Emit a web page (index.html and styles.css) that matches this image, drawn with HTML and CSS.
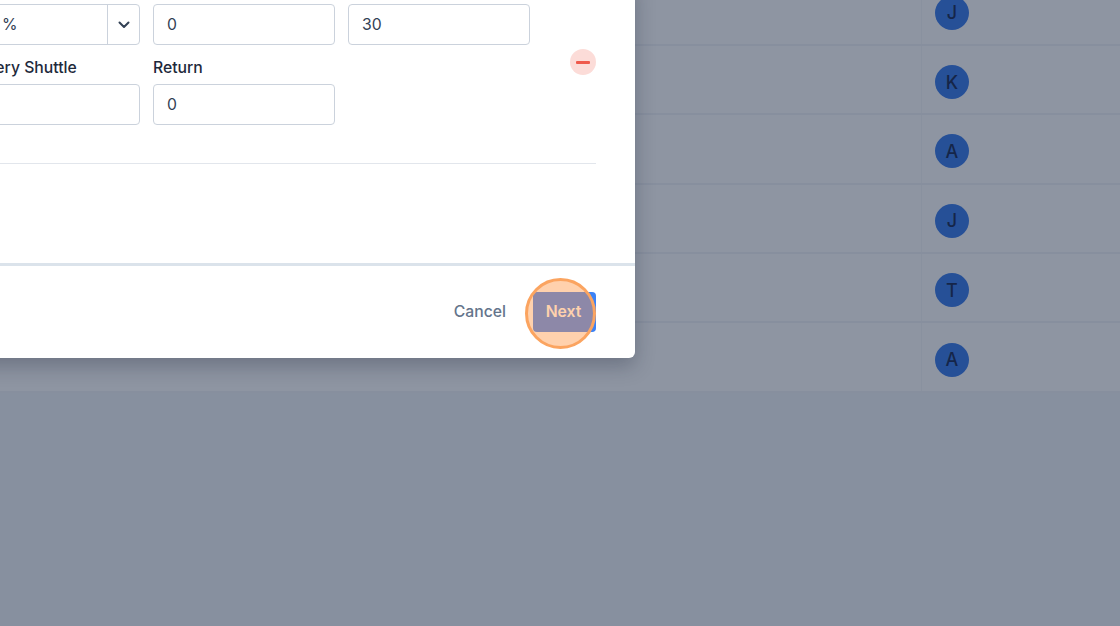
FILE: index.html
```html
<!DOCTYPE html>
<html lang="en">
<head>
<meta charset="utf-8">
<title>Add charges</title>
<link rel="stylesheet" href="styles.css">
</head>
<body>
<div class="page">
  <div class="table">
    <div class="row"><div class="cell-main"></div><div class="cell-user"><span class="avatar">J</span></div></div>
    <div class="row"><div class="cell-main"></div><div class="cell-user"><span class="avatar">K</span></div></div>
    <div class="row"><div class="cell-main"></div><div class="cell-user"><span class="avatar">A</span></div></div>
    <div class="row"><div class="cell-main"></div><div class="cell-user"><span class="avatar">J</span></div></div>
    <div class="row"><div class="cell-main"></div><div class="cell-user"><span class="avatar">T</span></div></div>
    <div class="row"><div class="cell-main"></div><div class="cell-user"><span class="avatar">A</span></div></div>
  </div>
  <div class="scrim"></div>
  <div class="modal">
    <div class="modal-body">
      <div class="charge">
        <div class="fields">
          <div class="field">
            <div class="box box-select"><span class="select-value">%</span><span class="select-arrow"><svg width="12" height="8" viewBox="0 0 12 8" fill="none"><path d="M1.5 1.5 6 6l4.5-4.5" stroke="#334155" stroke-width="2" stroke-linecap="round" stroke-linejoin="round"/></svg></span></div>
          </div>
          <div class="field"><div class="box">0</div></div>
          <div class="field"><div class="box">30</div></div>
          <div class="field labelled"><label class="label">Delivery Shuttle</label><div class="box"></div></div>
          <div class="field labelled"><label class="label">Return</label><div class="box">0</div></div>
        </div>
        <button class="remove" type="button" aria-label="Remove"><span class="minus"></span></button>
      </div>
      <div class="divider"></div>
    </div>
    <div class="modal-footer">
      <button class="btn-cancel" type="button">Cancel</button>
      <button class="btn-next" type="button">Next</button>
    </div>
  </div>
  <div class="spotlight"></div>
</div>
</body>
</html>
```
FILE: styles.css
```css
* { box-sizing: border-box; }
html, body { margin: 0; padding: 0; }
body { font-family: Inter, "Liberation Sans", sans-serif; background: #f1f5f9; }
.page { position: relative; width: 1120px; height: 626px; overflow: hidden; background: #f1f5f9; }

.table { margin-top: -23.5px; background: #fff; }
.row { display: flex; height: 69.4px; border-bottom: 2px solid #f1f3f6; }
.cell-main { width: 922px; border-right: 1px solid #f5f6f8; }
.cell-user { flex: 1; display: flex; align-items: center; padding-left: 13px; padding-top: 5px; }
.avatar { width: 34px; height: 34px; border-radius: 50%; background: #2f74e8; color: #0d1f4c; font-size: 18px; font-weight: 500; display: flex; align-items: center; justify-content: center; }

.scrim { position: absolute; inset: 0; background: rgba(29, 43, 69, 0.5); }

.modal { position: absolute; left: -65px; top: -20px; width: 700px; background: #fff; border-radius: 6px; box-shadow: 0 8px 20px rgba(20, 30, 50, 0.28); }
.modal-body { padding: 24px 39px 0 23px; }
.charge { display: flex; justify-content: space-between; }
.fields { display: grid; grid-template-columns: repeat(3, 182px); column-gap: 13px; row-gap: 12px; }
.field { display: flex; flex-direction: column; }
.labelled { gap: 6px; padding-top: 1px; }
.label { font-size: 15.75px; line-height: 20px; font-weight: 500; color: #1e293b; display: block; }
.box { height: 41px; border: 1px solid #cbd2dc; border-radius: 4px; background: #fff; padding-left: 13px; font-size: 15.75px; line-height: 39px; color: #334155; }
.box-select { display: flex; padding-left: 0; }
.select-value { flex: 1; padding-left: 43px; }
.select-arrow { width: 32px; border-left: 1px solid #cbd2dc; display: flex; align-items: center; justify-content: center; }

.remove { width: 26px; height: 26px; margin-top: 45px; padding: 0; border: 0; border-radius: 50%; background: #fcdcd8; display: flex; align-items: center; justify-content: center; }
.minus { width: 14px; height: 3px; border-radius: 1px; background: #ef5a4c; }

.divider { height: 1px; margin-top: 38px; margin-bottom: 99px; background: #e2e6ec; }

.modal-footer { height: 95px; border-top: 3px solid #dbe3eb; display: flex; align-items: center; justify-content: flex-end; gap: 27px; padding-right: 39px; }
.btn-cancel { padding: 0 0 2px; border: 0; background: none; font: 500 15.75px Inter, "Liberation Sans", sans-serif; color: #64748b; }
.btn-next { width: 63px; height: 40px; padding: 0 2px 2px 0; border: 0; border-radius: 4px; background: #3b82f6; color: #fff; font: 600 15.75px Inter, "Liberation Sans", sans-serif; }

.spotlight { position: absolute; left: 525px; top: 278px; width: 71px; height: 71px; border-radius: 50%; border: 3px solid #fba460; background: rgba(255, 145, 60, 0.42); }
```
